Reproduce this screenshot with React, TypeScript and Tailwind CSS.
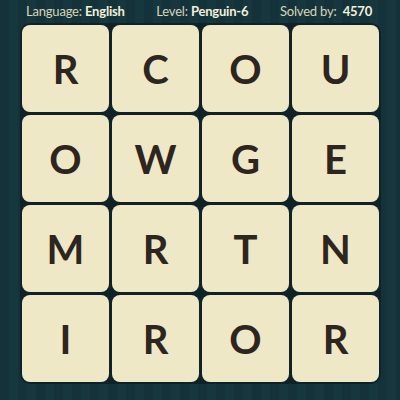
import React from "react";

const letters = ["R","C","O","U","O","W","G","E","M","R","T","N","I","R","O","R"];

export default function App() {
  return (
    <div className="w-[400px] h-[400px] overflow-hidden flex flex-col bg-[repeating-linear-gradient(90deg,#13323a_0px,#13323a_9px,#17373e_9px,#17373e_18px)]" style={{ fontFamily: "Lato, 'Noto Sans', sans-serif" }}>
      <div className="h-[23px] flex items-center justify-between pl-[26px] pr-[28px] text-[13px] tracking-[-0.2px] leading-none text-[#d8d5b9]">
        <span>Language: <b className="font-bold text-[#f3f0da]">English</b></span>
        <span>Level: <b className="font-bold text-[#f3f0da]">Penguin-6</b></span>
        <span>Solved by: <b className="font-bold text-[#f3f0da] ml-[3px]">4570</b></span>
      </div>
      <div className="ml-[20px] w-[361px] h-[361px] p-[2px] rounded-[10px] bg-[#0e2228] grid grid-cols-4 grid-rows-4 gap-[3px]">
        {letters.map((l, i) => (
          <div key={i} className="rounded-[8px] bg-[#efe8c7] flex items-center justify-center text-[40px] font-bold text-[#2c2520] leading-none">
            {l}
          </div>
        ))}
      </div>
    </div>
  );
}
